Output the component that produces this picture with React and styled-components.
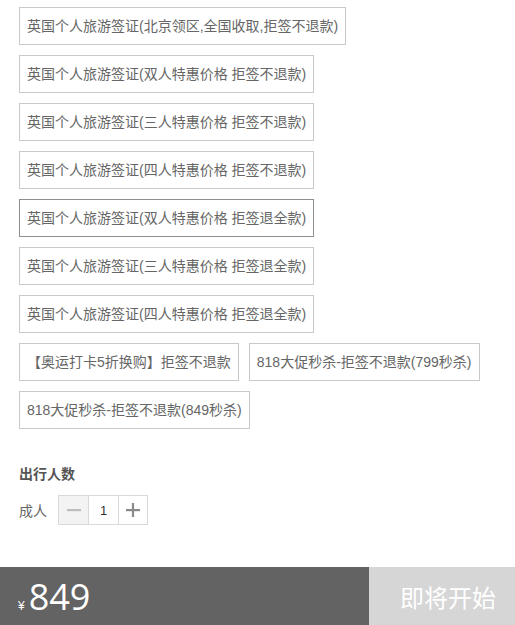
import React from "react";
import styled, { createGlobalStyle } from "styled-components";

const Global = createGlobalStyle`
  html, body { margin: 0; padding: 0; background: #fff; }
  body { font-family: "Liberation Sans", "Noto Sans CJK SC", Arial, sans-serif; }
  * { box-sizing: border-box; }
`;

const Page = styled.div`
  min-height: 625px;
  display: flex;
  flex-direction: column;
`;

const Content = styled.div`
  padding: 7px 19px 0 19px;
`;

const Options = styled.div`
  display: flex;
  flex-wrap: wrap;
  gap: 10px 10px;
  width: 470px;
`;

const Option = styled.div`
  height: 38px;
  line-height: 36px;
  padding: 0 7px 0 7px;
  border: 1px solid ${(p) => (p.$active ? "#8e8e8e" : "#c9c9c9")};
  color: #666;
  font-size: 14px;
  white-space: nowrap;
  flex: 0 0 auto;
  ${(p) => (p.$full ? "margin-right: 200px;" : "")}
`;

const SectionTitle = styled.div`
  margin-top: 35px;
  font-size: 14px;
  font-weight: bold;
  color: #555;
  line-height: 20px;
`;

const Row = styled.div`
  margin-top: 11px;
  display: flex;
  align-items: center;
`;

const Label = styled.span`
  font-size: 14px;
  color: #666;
  width: 39px;
`;

const Stepper = styled.div`
  display: flex;
  height: 30px;
  border: 1px solid #d9d9d9;
`;

const StepBtn = styled.div`
  width: ${(p) => p.$w}px;
  display: flex;
  align-items: center;
  justify-content: center;
  background: ${(p) => (p.$disabled ? "#f3f3f3" : "#fff")};
  ${(p) => (p.$divider ? "border-left: 1px solid #d9d9d9;" : "")}
  font-size: 13px;
  color: ${(p) => (p.$num ? "#333" : p.$disabled ? "#bdbdbd" : "#8a8a8a")};
`;

const Bar = styled.div`
  margin-top: auto;
  height: 58px;
  display: flex;
`;

const PriceArea = styled.div`
  flex: 1;
  background: #636363;
  color: #fff;
  display: flex;
  align-items: baseline;
  padding-left: 18px;
  padding-top: 9px;
`;

const Yen = styled.span`
  font-size: 12px;
  margin-right: 4px;
`;

const Amount = styled.span`
  font-size: 36px;
  line-height: 42px;
  font-family: "Open Sans", "Liberation Sans", sans-serif;
`;

const Action = styled.div`
  width: 146px;
  background: #d6d6d6;
  color: #fff;
  font-size: 24px;
  display: flex;
  align-items: center;
  justify-content: center;
  padding-left: 12px;
`;

const Minus = () => (
  <svg width="14" height="14" viewBox="0 0 14 14">
    <rect x="0" y="6" width="14" height="2.2" fill="currentColor" />
  </svg>
);
const Plus = () => (
  <svg width="14" height="14" viewBox="0 0 14 14">
    <rect x="0" y="6" width="14" height="2.2" fill="currentColor" />
    <rect x="5.9" y="0" width="2.2" height="14" fill="currentColor" />
  </svg>
);

const options = [
  { t: "英国个人旅游签证(北京领区,全国收取,拒签不退款)", full: true },
  { t: "英国个人旅游签证(双人特惠价格 拒签不退款)", full: true },
  { t: "英国个人旅游签证(三人特惠价格 拒签不退款)", full: true },
  { t: "英国个人旅游签证(四人特惠价格 拒签不退款)", full: true },
  { t: "英国个人旅游签证(双人特惠价格 拒签退全款)", full: true, active: true },
  { t: "英国个人旅游签证(三人特惠价格 拒签退全款)", full: true },
  { t: "英国个人旅游签证(四人特惠价格 拒签退全款)", full: true },
  { t: "【奥运打卡5折换购】拒签不退款" },
  { t: "818大促秒杀-拒签不退款(799秒杀)" },
  { t: "818大促秒杀-拒签不退款(849秒杀)" },
];

export default function App() {
  return (
    <Page>
      <Global />
      <Content>
        <Options>
          {options.map((o, i) => (
            <Option key={i} $active={o.active} $full={o.full}>
              {o.t}
            </Option>
          ))}
        </Options>
        <SectionTitle>出行人数</SectionTitle>
        <Row>
          <Label>成人</Label>
          <Stepper>
            <StepBtn $w={29} $disabled>
              <Minus />
            </StepBtn>
            <StepBtn $w={30} $divider $num>
              1
            </StepBtn>
            <StepBtn $w={29} $divider>
              <Plus />
            </StepBtn>
          </Stepper>
        </Row>
      </Content>
      <Bar>
        <PriceArea>
          <Yen>¥</Yen>
          <Amount>849</Amount>
        </PriceArea>
        <Action>即将开始</Action>
      </Bar>
    </Page>
  );
}
